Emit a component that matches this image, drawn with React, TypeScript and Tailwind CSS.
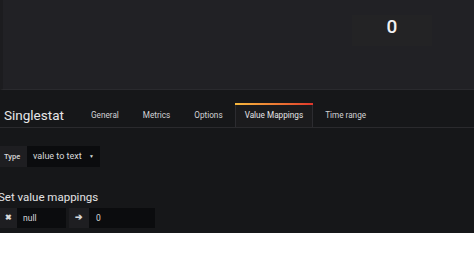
const tabs = ['General', 'Metrics', 'Options', 'Value Mappings', 'Time range']

function Tab({ label, active }: { label: string; active?: boolean }) {
  if (active) {
    return (
      <div className="relative flex h-[24px] items-center border-x border-[#2c2c30] bg-[#1b1b1d] px-[9px] text-[#e4e4e6]">
        <div className="absolute left-[-1px] right-[-1px] top-0 h-[2px] bg-gradient-to-r from-[#f5b73d] to-[#e0342b]" />
        {label}
      </div>
    )
  }
  return <div className="flex h-[24px] items-center px-[12px] text-[#d3d3d6]">{label}</div>
}

export default function App() {
  return (
    <div className="h-[254px] w-[474px] overflow-hidden bg-white font-['Roboto',sans-serif]">
      <div className="h-[233px] bg-[#161719]">
        <div className="flex h-[90px] justify-end border-b border-l-[3px] border-[#2a2a2e] border-l-[#1c1c1f] bg-[#212125] pr-[42px] pt-[15px]">
          <div className="flex h-[31px] w-[80px] items-start justify-center bg-[#232325] pt-[2px] text-[19px] font-medium leading-none text-[#f1f1f3]">
            0
          </div>
        </div>

        <div className="mt-[13px] flex h-[25px] items-end border-b border-[#2a2a2d]">
          <div className="flex h-[24px] w-[80px] items-center pl-[4px] text-[13.5px] text-[#e6e6e8]">Singlestat</div>
          <div className="ml-[-1px] flex items-end text-[8.2px]">
            {tabs.map((t) => (
              <Tab key={t} label={t} active={t === 'Value Mappings'} />
            ))}
          </div>
        </div>

        <div className="mt-[18px] flex h-[21px] items-stretch text-[9px]">
          <div className="flex w-[27px] items-center bg-[#1e1e21] pl-[4px] text-[7.5px] font-medium text-[#d8d9da]">Type</div>
          <div className="flex w-[73px] items-center justify-between bg-[#0b0c0e] pl-[6px] pr-[6px] text-[#d8d9da]">
            <span>value to text</span>
            <span className="text-[5px]">▼</span>
          </div>
        </div>

        <div className="ml-[-2px] mt-[23px] text-[11.5px] leading-[14px] text-[#e3e3e5]">Set value mappings</div>

        <div className="mt-[4px] flex h-[20px] items-stretch text-[8.5px] text-[#d8d9da]">
          <div className="flex w-[17px] items-center justify-center bg-[#1e1e21] text-[8px] font-bold">✖</div>
          <div className="flex w-[49px] items-center bg-[#0b0c0e] pl-[6px]">null</div>
          <div className="ml-[3px] flex w-[20px] items-center justify-center bg-[#1e1e21] text-[9px] font-bold">➔</div>
          <div className="flex w-[66px] items-center bg-[#0b0c0e] pl-[7px]">0</div>
        </div>
      </div>
    </div>
  )
}
